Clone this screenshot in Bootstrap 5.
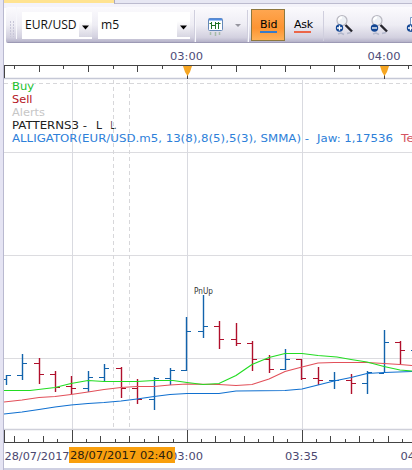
<!DOCTYPE html>
<html lang="en">
<head>
    <meta charset="UTF-8">
    <meta name="viewport" content="width=device-width, initial-scale=1.0">
    <title>EUR/USD m5</title>
    <link href="https://cdn.jsdelivr.net/npm/bootstrap@5.3.0/dist/css/bootstrap.min.css" rel="stylesheet">
    <style>
        body {
            width: 412px;
            height: 470px;
            background: #fff;
            font-family: "Open Sans", "Noto Sans", sans-serif;
            color: #111;
        }
        .tab-strip { height: 8px; background: #f4f3fa; }
        .tab-active { width: 110px; height: 3px; background: #ffe391; }
        .tab-rest { height: 4px; background: #e7e7f3; border-left: 1px solid #aaa9bd; border-bottom: 1px solid #bcbbcf; }
        .window-edge { width: 4px; background: #e5e4f3; border-right: 1px solid #b9b9d0; }
        .toolbar-row { height: 36px; padding-left: 2px; }
        .toolbar-body {
            background: linear-gradient(#fbfafd 0%, #eeedf4 50%, #d2d0df 85%, #b8b5cb 96%, #8e8ba9 100%);
            border-radius: 2px 0 0 2px;
            margin-top: -1px;
        }
        .toolbar-body > * { flex-shrink: 0; }
        .grip { width: 11px; border-right: 1px solid #f7f7fb; }
        .combo { height: 27px; background: #fff; font-size: 13px; line-height: 25px; margin-top: 5px; padding-left: 3px; }
        .combo-name { width: 0; transform-origin: left; transform: scaleX(.93); white-space: nowrap; }
        .combo-pair { width: 70px; margin-left: 5px; }
        .combo-period { width: 92px; margin-left: 6px; }
        .drop { width: 13px; height: 16px; margin-top: 9px; background: linear-gradient(#fff, #d7d6e2); }
        .divider { width: 2px; height: 32px; margin-top: 3px; background: #d0cfde; border-right: 1px solid #f8f8fc; }
        .chart-btn { width: 51px; }
        .price-btn { font: 11px "DejaVu Sans", sans-serif; color: #000; height: 32px; margin-top: 2px; }
        .price-btn span { line-height: 11px; border-bottom: 2px solid; height: 14px; margin-top: 10px; margin-left: 9px; display: block; width: 17px; white-space: nowrap; }
        .price-bid { width: 34px; margin-left: 2px; background: linear-gradient(#ffa650, #fd9432 60%, #ffb057); border: 1px solid #8e783f; }
        .price-bid span { border-color: #397bc9; margin-left: 8px; margin-top: 9px; }
        .price-ask { width: 38px; }
        .price-ask span { border-color: #ec6548; letter-spacing: -.3px; }
        .chart-label { font-family: "DejaVu Sans", sans-serif; }
    </style>
</head>
<body class="d-flex overflow-hidden">
    <div class="window-edge flex-shrink-0"></div>
    <main class="flex-grow-1 d-flex flex-column overflow-hidden">
        <div class="tab-strip d-flex align-items-start">
            <div class="tab-active"></div>
            <div class="tab-rest flex-grow-1"></div>
        </div>
        <div class="toolbar-row">
            <div class="toolbar-body d-flex h-100">
                <svg class="grip" height="32"><path d="M4.500 14v16M7.500 14v16" stroke="#c8c7d8" stroke-dasharray="2 1"/></svg>
                <div class="combo combo-pair d-flex justify-content-between">
                    <div class="combo-name">EUR/USD</div>
                    <div class="drop"><svg class="d-block" width="13" height="12"><path d="M3 4.500h7l-3.500 4z" fill="#000"/></svg></div>
                </div>
                <div class="combo combo-period d-flex justify-content-between">
                    <div class="combo-name">m5</div>
                    <div class="drop"><svg class="d-block" width="13" height="12"><path d="M3 4.500h7l-3.500 4z" fill="#000"/></svg></div>
                </div>
                <div class="divider ms-1"></div>
                <div class="chart-btn">
                    <svg class="d-block" width="51" height="35">
                        <rect x="12.500" y="11.500" width="14" height="12" rx="1" fill="#fff" stroke="#6488b8"/>
                        <path d="M13 12.500h13" stroke="#508be0" stroke-width="2"/>
                        <path d="M15.500 15v7M13.500 16.500h2M15.500 18.500h4M19.500 15v7M19.500 16.500h3M22.500 15v7M22.500 16.500h2" fill="none" stroke="#217125"/>
                        <path d="M14.500 25v3M19.500 25v4M23.500 25v3" stroke="#a7bda9" stroke-width="1.500"/>
                        <path d="M39 17h6l-3 3z" fill="#96959f"/>
                    </svg>
                </div>
                <div class="divider"></div>
                <div class="price-btn price-bid"><span>Bid</span></div>
                <div class="price-btn price-ask"><span>Ask</span></div>
                <svg width="89" height="35">
                    <defs>
                        <g id="lens">
                            <path d="M9.500 10l6.500 6.500" stroke="#25252d" stroke-width="2.400"/>
                            <circle cx="6" cy="5.500" r="5" fill="#edf0f5" stroke="#b9b8c1" stroke-width="1.200"/>
                            <path d="M2.800 5.500a3.500 3.500 0 0 1 3.200-3" fill="none" stroke="#fff" stroke-width="2"/>
                            <path d="M2 19l3-1 3 1.500M11 18.500l4-1" fill="none" stroke="#b3b8cc" stroke-width="1.600"/>
                            <circle cx="3.500" cy="13" r="3.700" fill="#134795"/>
                        </g>
                    </defs>
                    <path d="M.500 4v30" stroke="#d0cfde"/>
                    <use href="#lens" x="13" y="8"/><path d="M14 21h5M16.500 18.500v5" stroke="#fff" stroke-width="1.300"/>
                    <use href="#lens" x="48" y="8"/><path d="M49 21h5" stroke="#fff" stroke-width="1.300"/>
                    <path d="M87.500 10.500h9v14h-9z" fill="#fff" stroke="#7798c7"/>
                    <circle cx="87.500" cy="21" r="3.700" fill="#134795"/><path d="M85 21h5M87.500 18.500v5" stroke="#fff" stroke-width="1.300"/>
                </svg>
            </div>
        </div>
        <svg id="chart" class="d-block flex-shrink-0" width="408" height="426" viewBox="4 44 408 426"></svg>
    </main>

    <script src="https://cdn.jsdelivr.net/npm/bootstrap@5.3.0/dist/js/bootstrap.bundle.min.js"></script>
    <script>
        const chart = document.getElementById('chart');
        const BLUE = '#1263ac';
        const RED = '#b0102c';
        let out = '';

        function line(x1, y1, x2, y2, color, extra = '') {
            out += `<path d="M${x1} ${y1}L${x2} ${y2}" stroke="${color}" ${extra}/>`;
        }

        function label(x, y, text, width, color, size = 11) {
            out += `<text class="chart-label" x="${x}" y="${y}" fill="${color}" font-size="${size}" textLength="${width}" lengthAdjust="spacingAndGlyphs">${text}</text>`;
        }

        // grid
        [152, 255, 358].forEach(y => line(4, y + .5, 412, y + .5, '#dcdce0'));
        [72, 187, 302].forEach(x => line(x + .5, 80, x + .5, 429, '#d9dae0'));
        [113, 129].forEach(x => line(x + .5, 80, x + .5, 429, '#d7d7da', 'stroke-dasharray="4 3"'));
        line(4, 83.5, 412, 83.5, '#d7d7da', 'stroke-dasharray="4 3"');

        // top axis
        line(4, 65.5, 412, 65.5, '#444');
        line(4, 78.5, 412, 78.5, '#c5c8d6', 'stroke-width="1.5"');
        line(4.5, 65, 4.5, 78, '#444');
        [14, 63, 113, 162, 211, 260, 310, 359, 408].forEach(x => line(x + .5, 66, x + .5, 69, '#444'));
        [39, 88, 137, 236, 285, 334].forEach(x => line(x + .5, 66, x + .5, 72, '#444'));
        [187, 384].forEach(x => {
            line(x + .5, 74, x + .5, 79, '#443f42');
            out += `<path d="M${x - 4} 66h9l-2 6-2.5 4-2.5-4z" fill="#f6a623"/>`;
        });
        label(170, 60, '03:00', 33, '#4e4c78');
        label(367.5, 60, '04:00', 33, '#4e4c78');

        // bottom axis
        line(4, 429.5, 412, 429.5, '#cfd0da', 'stroke-width="1.5"');
        line(4, 442.5, 412, 442.5, '#444');
        [4, 72, 187, 302].forEach(x => line(x + .5, 430, x + .5, 442, '#444'));
        [14, 43, 100, 129, 158, 215, 244, 273, 330, 359, 388].forEach(x => line(x + .5, 436, x + .5, 442, '#444'));
        [28, 57, 86, 115, 144, 173, 201, 230, 258, 287, 316, 345, 373, 402].forEach(x => line(x + .5, 439, x + .5, 442, '#444'));
        label(4.5, 460, '28/07/2017', 65, '#4b4870');
        label(170, 460, '03:00', 33, '#4b4870');
        label(285, 460, '03:35', 33, '#4b4870');
        label(400.5, 460, '04:10', 33, '#4b4870');
        out += '<rect x="69" y="447" width="106" height="16" fill="#f99f0d"/>';
        label(70, 459, '28/07/2017 02:40', 103, '#2a200d');
        out += '<rect x="4" y="468" width="408" height="2" fill="#cfd0e2"/>';

        // x, high, low, open, close, direction
        const bars = [
            [6, 375, 385, 379, 375, 1], [22, 354, 380, 375, 363, 1], [39, 358, 384, 363, 374, 0],
            [55, 371, 392, 374, 387, 0], [71, 376, 394, 386, 388, 0], [88, 371, 392, 388, 377, 1],
            [104, 364, 381, 377, 368, 1], [121, 367, 398, 368, 388, 0], [137, 379, 404, 388, 399, 0],
            [154, 377, 410, 399, 378, 1], [170, 368, 385, 378, 370, 1], [186, 317, 371, 370, 331, 1],
            [203, 295, 338, 331, 326, 1], [219, 321, 349, 326, 339, 0], [236, 323, 346, 339, 343, 0],
            [252, 341, 371, 343, 359, 0], [269, 355, 373, 359, 369, 0], [285, 349, 370, 369, 359, 1],
            [301, 359, 380, 359, 378, 0], [318, 367, 385, 378, 380, 0], [334, 372, 389, 380, 380, 1],
            [351, 374, 394, 380, 383, 0], [367, 371, 394, 383, 372, 1], [384, 330, 373, 373, 342, 1],
            [400, 341, 364, 342, 350, 0], [416, 340, 355, 350, 345, 1]
        ];
        bars.forEach(([x, high, low, open, close, up]) => {
            const color = up ? BLUE : RED;
            line(x + .5, high, x + .5, low, color, 'stroke-width="1.4"');
            line(Math.max(4, x - 5), open + .5, x, open + .5, color);
            line(x + 1, close + .5, x + 5, close + .5, color);
        });

        // alligator lines
        function average(points, color) {
            out += `<polyline points="${points}" fill="none" stroke="${color}" stroke-width="1.2"/>`;
        }
        average('4,414 22,412 39,409.5 55,407 71,405 88,403.5 104,402.5 121,401 137,399 154,396.5 170,394.5 187,393.5 219,393.5 236,391 285,390.5 302,389 318,385 334,381 351,377.5 367,373.5 384,372.5 412,371.5', '#1070d0');
        average('4,402 22,400 39,397.5 55,396.5 71,394.5 88,392 104,389.5 121,387.5 137,386.5 154,386.5 170,385 187,384 219,384.5 236,385.5 252,384.5 269,379 285,371.5 302,367 318,363 334,362.5 367,362.5 384,363.5 400,364.5 412,365.5', '#e2505a');
        average('4,390.5 30,390.5 55,387.5 71,383.5 88,380.5 104,381.5 137,381.5 154,380.5 173,380.5 187,382.5 203,384.5 219,383.5 236,375.5 252,364.5 269,357.5 285,353.5 302,353.5 318,355.5 337,357 351,359.5 367,362 384,366.5 400,370 412,371', '#22dc22');
        label(194, 294, 'PnUp', 19, '#333', 8);

        // legend
        label(12, 90, 'Buy', 22, '#20c12c');
        label(12, 103, 'Sell', 20.5, '#b41425');
        label(12, 116, 'Alerts', 33, '#c6c6c6');
        label(12, 129, 'PATTERNS3 -', 75, '#202020');
        label(96, 129, 'L', 6, '#202020');
        label(110.5, 129, 'L.', 6, '#202020', 10);
        label(12, 142, 'ALLIGATOR(EUR/USD.m5, 13(8),8(5),5(3), SMMA) -', 297, '#2d80d9');
        label(317, 142, 'Jaw: 1,17536', 76, '#2d80d9');
        label(401, 142, 'Teeth', 33, '#d55562');

        chart.innerHTML = out;
    </script>
</body>
</html>
